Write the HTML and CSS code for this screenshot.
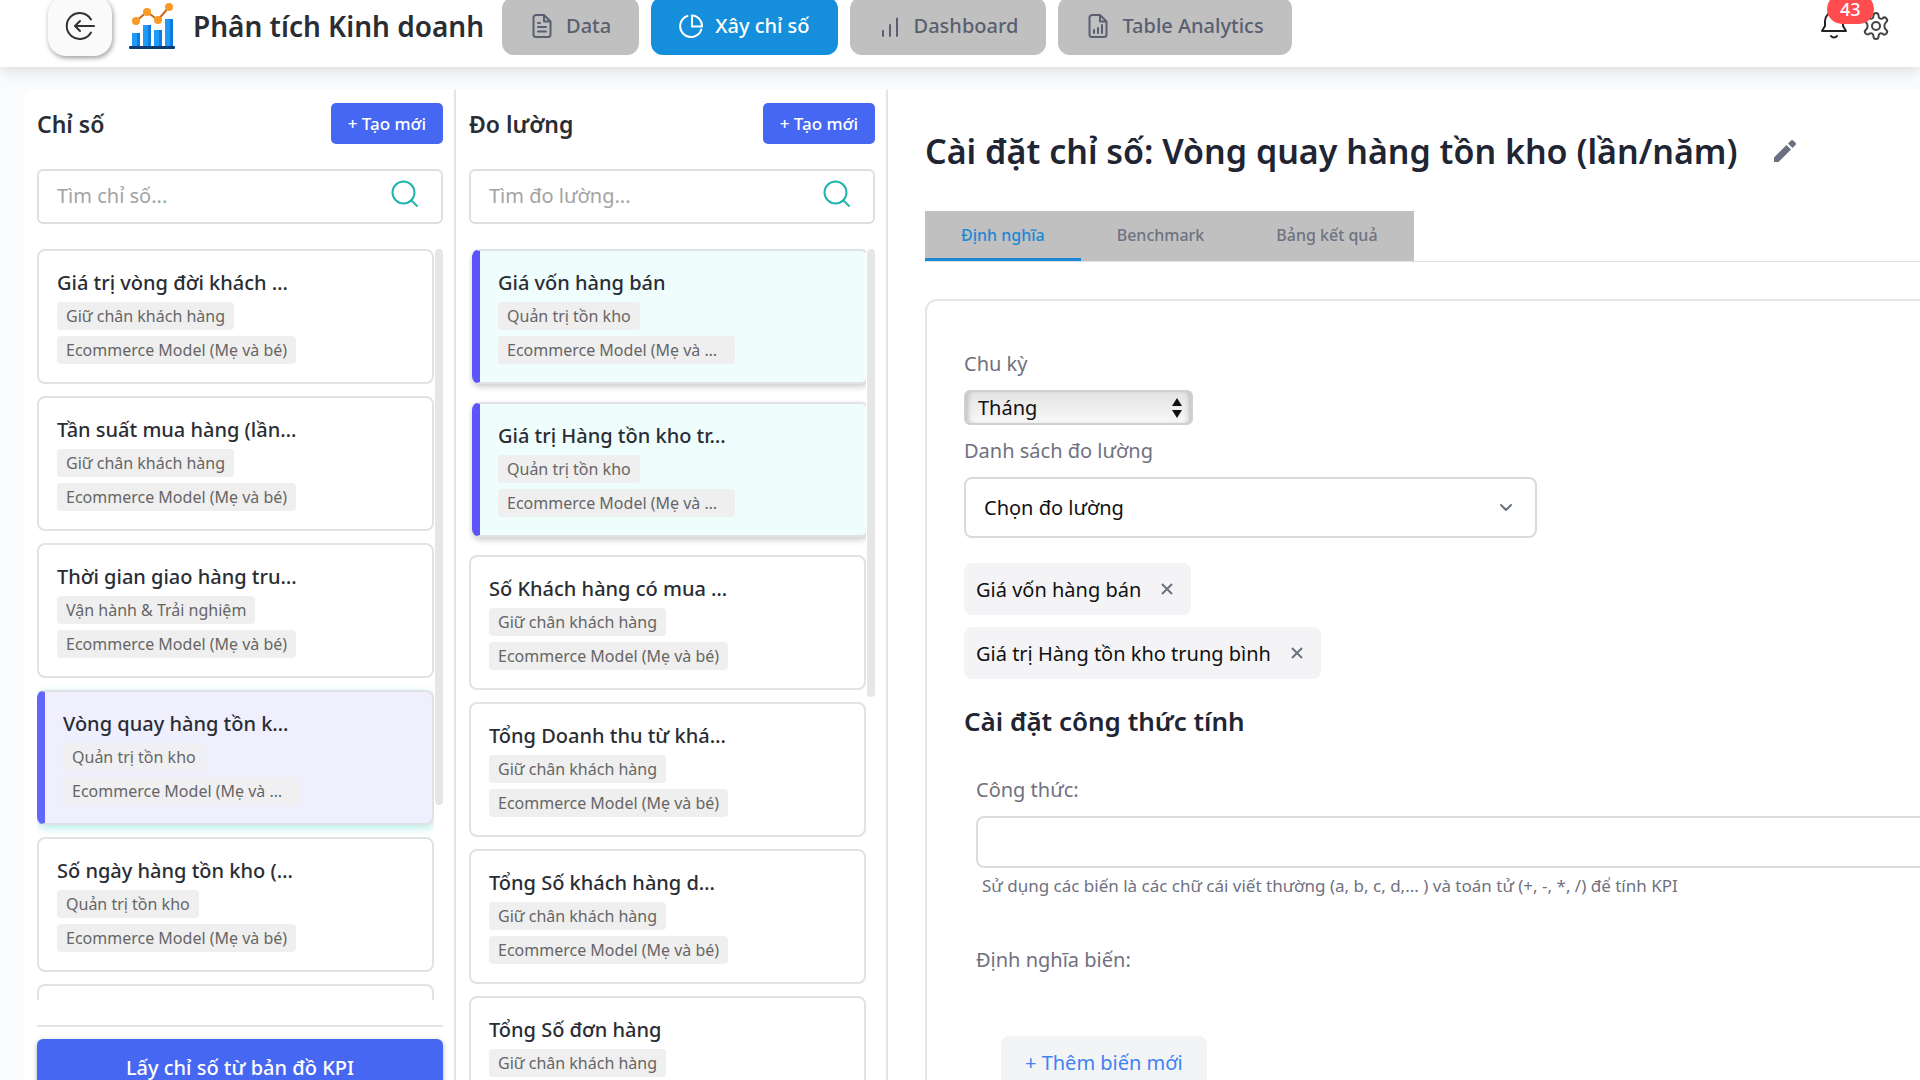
FILE: index.html
```
<!DOCTYPE html>
<html lang="vi">

<head>
    <meta charset="UTF-8">
    <meta name="viewport" content="width=device-width, initial-scale=1.0">
    <title>Phân tích Kinh doanh</title>
    <link rel="stylesheet" href="styles.css">
</head>

<body>
    <header class="topbar">
        <button class="back-btn" aria-label="Quay lại">
            <svg width="32" height="32" viewBox="0 0 32 32" fill="none" stroke="#333" stroke-width="2" stroke-linecap="round" stroke-linejoin="round">
                <path d="M27 9.500A13 13 0 1 0 27 22.500M30 16H11M16 11l-5 5 5 5" />
            </svg>
        </button>
        <svg class="logo" width="46" height="48" viewBox="0 0 46 48">
            <g fill="#1d9bf6">
                <rect x="3" y="31" width="8" height="14" />
                <rect x="14" y="23" width="8" height="22" />
                <rect x="25" y="28" width="8" height="17" />
                <rect x="36" y="17" width="8" height="28" />
            </g>
            <g fill="#0d7be0">
                <rect x="8" y="31" width="3" height="14" />
                <rect x="19" y="23" width="3" height="22" />
                <rect x="30" y="28" width="3" height="17" />
                <rect x="41" y="17" width="3" height="28" />
            </g>
            <rect y="44" width="46" height="3" rx="1" fill="#0b3a75" />
            <path d="M7 19L18 10L29 18L40 5" fill="none" stroke="#c9691c" stroke-width="2" />
            <g fill="#fb9a28">
                <circle cx="7" cy="19" r="4" />
                <circle cx="18" cy="10" r="4" />
                <circle cx="29" cy="18" r="4" />
                <circle cx="40" cy="5" r="4" />
            </g>
        </svg>
        <h1>Phân tích Kinh doanh</h1>
        <nav class="main-nav">
            <button class="nav-btn">
                <svg width="24" height="24" viewBox="0 0 24 24" fill="none" stroke="currentColor" stroke-width="2" stroke-linecap="round" stroke-linejoin="round">
                    <path d="M14 1H6a2.500 2.500 0 0 0-2.500 2.500v17A2.500 2.500 0 0 0 6 23h12a2.500 2.500 0 0 0 2.500-2.500V7.500zM14 1v6.500h6.500M8 9h2M8 13h8M8 17.500h8" />
                </svg>
                Data
            </button>
            <button class="nav-btn active">
                <svg width="24" height="24" viewBox="0 0 24 24" fill="none" stroke="currentColor" stroke-width="2" stroke-linecap="round" stroke-linejoin="round">
                    <path d="M8.500 2A10.800 10.800 0 1 0 22.300 15.500M13 1.500v11h10A10.500 10.500 0 0 0 13 1.500z" />
                </svg>
                Xây chỉ số
            </button>
            <button class="nav-btn">
                <svg width="24" height="24" viewBox="0 0 24 24" fill="none" stroke="currentColor" stroke-width="2" stroke-linecap="round">
                    <path d="M5 17v5M12 11v11M19 4.500v17.500" />
                </svg>
                Dashboard
            </button>
            <button class="nav-btn">
                <svg width="24" height="24" viewBox="0 0 24 24" fill="none" stroke="currentColor" stroke-width="2" stroke-linecap="round" stroke-linejoin="round">
                    <path d="M14 1H6a2.500 2.500 0 0 0-2.500 2.500v17A2.500 2.500 0 0 0 6 23h12a2.500 2.500 0 0 0 2.500-2.500V7.500zM14 1v6.500h6.500M8 16v3M12 14v5M16 11v8" />
                </svg>
                Table Analytics
            </button>
        </nav>
        <div class="top-actions">
            <button class="icon-btn bell" aria-label="Thông báo">
                <svg width="28" height="28" viewBox="0 0 28 28" fill="none" stroke="#222" stroke-width="2" stroke-linecap="round" stroke-linejoin="round">
                    <path d="M2 19h24l-3-5V9a9 9 0 0 0-18 0v5zM11 24c1.500 2 4.500 2 6 0" />
                </svg>
                <span class="badge">43</span>
            </button>
            <button class="icon-btn" aria-label="Cài đặt">
                <svg width="28" height="28" viewBox="0 0 28 28" fill="none" stroke="#444" stroke-width="2" stroke-linecap="round" stroke-linejoin="round">
                    <circle cx="14" cy="14" r="4" />
                    <path d="M11.500 3.500a2.500 2.500 0 0 1 5 0c0 3 2 4 4.200 2.800a2.500 2.500 0 0 1 3.600 3.700c-2.600 2-2.600 6 0 8a2.500 2.500 0 0 1-3.600 3.700c-2.200-1.200-4.200-.2-4.200 2.800a2.500 2.500 0 0 1-5 0c0-3-2-4-4.200-2.800A2.500 2.500 0 0 1 3.700 18c2.600-2 2.600-6 0-8a2.500 2.500 0 0 1 3.600-3.700C9.500 7.500 11.500 6.500 11.500 3.500z" />
                </svg>
            </button>
        </div>
    </header>

    <main class="workspace">
        <section class="column">
            <div class="column-head">
                <h2>Chỉ số</h2>
                <button class="create-btn">+ Tạo mới</button>
            </div>
            <div class="search">
                <input type="text" placeholder="Tìm chỉ số..." aria-label="Tìm chỉ số">
                <svg width="28" height="28" viewBox="0 0 28 28" fill="none" stroke="#1fb5ad" stroke-width="2" stroke-linecap="round">
                    <circle cx="12.500" cy="12.500" r="11" />
                    <path d="M20.500 20.500L26 26" />
                </svg>
            </div>
            <div class="scroll-area">
                <ul class="card-list">
                    <li class="card">
                        <h3>Giá trị vòng đời khách …</h3>
                        <span class="tag">Giữ chân khách hàng</span>
                        <span class="tag">Ecommerce Model (Mẹ và bé)</span>
                    </li>
                    <li class="card">
                        <h3>Tần suất mua hàng (lần…</h3>
                        <span class="tag">Giữ chân khách hàng</span>
                        <span class="tag">Ecommerce Model (Mẹ và bé)</span>
                    </li>
                    <li class="card">
                        <h3>Thời gian giao hàng tru…</h3>
                        <span class="tag">Vận hành &amp; Trải nghiệm</span>
                        <span class="tag">Ecommerce Model (Mẹ và bé)</span>
                    </li>
                    <li class="card current">
                        <h3>Vòng quay hàng tồn k…</h3>
                        <span class="tag">Quản trị tồn kho</span>
                        <span class="tag cut">Ecommerce Model (Mẹ và …</span>
                    </li>
                    <li class="card">
                        <h3>Số ngày hàng tồn kho (…</h3>
                        <span class="tag">Quản trị tồn kho</span>
                        <span class="tag">Ecommerce Model (Mẹ và bé)</span>
                    </li>
                    <li class="card"></li>
                </ul>
                <div class="thumb"></div>
            </div>
            <div class="column-foot">
                <button class="map-btn">Lấy chỉ số từ bản đồ KPI</button>
            </div>
        </section>

        <section class="column">
            <div class="column-head">
                <h2>Đo lường</h2>
                <button class="create-btn">+ Tạo mới</button>
            </div>
            <div class="search">
                <input type="text" placeholder="Tìm đo lường..." aria-label="Tìm đo lường">
                <svg width="28" height="28" viewBox="0 0 28 28" fill="none" stroke="#1fb5ad" stroke-width="2" stroke-linecap="round">
                    <circle cx="12.500" cy="12.500" r="11" />
                    <path d="M20.500 20.500L26 26" />
                </svg>
            </div>
            <div class="scroll-area">
                <ul class="card-list">
                    <li class="card picked">
                        <h3>Giá vốn hàng bán</h3>
                        <span class="tag">Quản trị tồn kho</span>
                        <span class="tag cut">Ecommerce Model (Mẹ và …</span>
                    </li>
                    <li class="card picked">
                        <h3>Giá trị Hàng tồn kho tr…</h3>
                        <span class="tag">Quản trị tồn kho</span>
                        <span class="tag cut">Ecommerce Model (Mẹ và …</span>
                    </li>
                    <li class="card">
                        <h3>Số Khách hàng có mua …</h3>
                        <span class="tag">Giữ chân khách hàng</span>
                        <span class="tag">Ecommerce Model (Mẹ và bé)</span>
                    </li>
                    <li class="card">
                        <h3>Tổng Doanh thu từ khá…</h3>
                        <span class="tag">Giữ chân khách hàng</span>
                        <span class="tag">Ecommerce Model (Mẹ và bé)</span>
                    </li>
                    <li class="card">
                        <h3>Tổng Số khách hàng d…</h3>
                        <span class="tag">Giữ chân khách hàng</span>
                        <span class="tag">Ecommerce Model (Mẹ và bé)</span>
                    </li>
                    <li class="card">
                        <h3>Tổng Số đơn hàng</h3>
                        <span class="tag">Giữ chân khách hàng</span>
                    </li>
                </ul>
                <div class="thumb short"></div>
            </div>
        </section>

        <section class="detail">
            <div class="detail-title">
                <h2>Cài đặt chỉ số: Vòng quay hàng tồn kho (lần/năm)</h2>
                <button class="icon-btn" aria-label="Sửa tên">
                    <svg width="24" height="24" viewBox="0 0 24 24" fill="#6b7080">
                        <path d="M1 18.500V23h4.500L18 10.500 13.500 6zM22.500 6a1.500 1.500 0 0 0 0-2.200L20.200 1.500a1.500 1.500 0 0 0-2.200 0L15 4.500 19.500 9z" />
                    </svg>
                </button>
            </div>
            <div class="tabs">
                <button class="tab active">Định nghĩa</button>
                <button class="tab">Benchmark</button>
                <button class="tab">Bảng kết quả</button>
            </div>
            <form class="panel">
                <label for="period">Chu kỳ</label>
                <div class="period">
                    <select id="period">
                        <option>Tháng</option>
                    </select>
                    <svg width="10" height="20" viewBox="0 0 10 20" fill="#111">
                        <path d="M5 0l5 8H0zM5 20l5-8H0z" />
                    </svg>
                </div>
                <label for="measure">Danh sách đo lường</label>
                <div class="measure">
                    <select id="measure">
                        <option>Chọn đo lường</option>
                    </select>
                    <svg width="14" height="10" viewBox="0 0 14 10" fill="none" stroke="#6b7280" stroke-width="2" stroke-linecap="round" stroke-linejoin="round">
                        <path d="M2 2l5 5 5-5" />
                    </svg>
                </div>
                <div class="chips">
                    <span class="chip">Giá vốn hàng bán
                        <button type="button" aria-label="Xóa">
                            <svg width="12" height="12" viewBox="0 0 12 12" stroke="#6b7280" stroke-width="2"><path d="M1 1l10 10M11 1L1 11" /></svg>
                        </button>
                    </span>
                    <span class="chip">Giá trị Hàng tồn kho trung bình
                        <button type="button" aria-label="Xóa">
                            <svg width="12" height="12" viewBox="0 0 12 12" stroke="#6b7280" stroke-width="2"><path d="M1 1l10 10M11 1L1 11" /></svg>
                        </button>
                    </span>
                </div>
                <h3>Cài đặt công thức tính</h3>
                <div class="formula">
                    <label for="formula">Công thức:</label>
                    <input type="text" id="formula">
                    <p>Sử dụng các biến là các chữ cái viết thường (a, b, c, d,... ) và toán tử (+, -, *, /) để tính KPI</p>
                    <span class="variables">Định nghĩa biến:</span>
                    <button type="button" class="add-btn">+ Thêm biến mới</button>
                </div>
            </form>
        </section>
    </main>
</body>

</html>
```
FILE: styles.css
```
* {
    box-sizing: border-box;
}

body {
    margin: 0;
    height: 100vh;
    display: flex;
    flex-direction: column;
    overflow: hidden;
    font-family: "Noto Sans", sans-serif;
    font-size: 20px;
    color: #2a2d34;
    background: #fafbfd;
}

h1,
h2,
h3,
p,
ul {
    margin: 0;
    padding: 0;
}

button,
input,
select {
    font: inherit;
}

button {
    border: none;
    cursor: pointer;
}

/* header */
.topbar {
    display: flex;
    flex: none;
    align-items: center;
    height: 67px;
    padding: 0 30px 16px 48px;
    background: #fff;
    box-shadow: 0 2px 16px rgba(0, 0, 0, 0.15);
}

.back-btn {
    display: flex;
    align-items: center;
    justify-content: center;
    width: 64px;
    height: 60px;
    padding: 0;
    border-radius: 18px;
    background: #fafafa;
    box-shadow: 1px 2px 5px rgba(0, 0, 0, 0.4);
}

.logo {
    margin: 0 18px 0 17px;
}

h1 {
    font-size: 28px;
    font-weight: 600;
    white-space: nowrap;
}

.main-nav {
    display: flex;
    gap: 12px;
    margin-left: 18px;
}

.nav-btn {
    display: flex;
    align-items: center;
    gap: 12px;
    height: 58px;
    padding: 0 28px;
    border-radius: 12px;
    background: #c0c0c0;
    color: #5a5f70;
    font-weight: 500;
    white-space: nowrap;
}

.nav-btn.active {
    background: #158fdb;
    color: #fff;
}

.top-actions {
    display: flex;
    gap: 14px;
    margin-left: auto;
}

.icon-btn {
    display: flex;
    padding: 0;
    background: none;
}

.bell {
    position: relative;
}

.badge {
    position: absolute;
    top: -18px;
    left: 7px;
    padding: 0 13px;
    border-radius: 16px;
    background: #ff4d4f;
    color: #fff;
    font-size: 18px;
    font-weight: 500;
    line-height: 30px;
}

/* columns */
.workspace {
    display: flex;
    flex: 1;
    min-height: 0;
    margin: 23px 0 -28px 24px;
    border-radius: 8px 0 0 0;
    background: #fff;
}

.column {
    display: flex;
    flex: none;
    flex-direction: column;
    width: 432px;
    padding: 13px 11px 13px 13px;
    border-right: 2px solid #e2e4e8;
}

.column-head {
    display: flex;
    align-items: center;
    justify-content: space-between;
}

.column-head h2 {
    font-size: 23px;
    font-weight: 600;
    line-height: 40px;
}

.create-btn {
    height: 41px;
    padding: 0 17px;
    border-radius: 5px;
    background: #4667f2;
    color: #fff;
    font-size: 17px;
    font-weight: 500;
}

.search {
    display: flex;
    flex: none;
    align-items: center;
    height: 55px;
    margin: 25px 0;
    padding: 0 22px 6px 18px;
    border: 2px solid #dfdfe2;
    border-radius: 6px;
}

.search input {
    flex: 1;
    min-width: 0;
    padding: 4px 0 0;
    border: none;
    outline: none;
    background: none;
}

.search input::placeholder {
    color: #a3a3a3;
}

.scroll-area {
    display: flex;
    flex: 1;
    gap: 1px;
    min-height: 0;
}

.card-list {
    flex: 1;
    min-width: 0;
    overflow: hidden;
    list-style: none;
}

.card {
    display: flex;
    flex-direction: column;
    align-items: flex-start;
    gap: 6px;
    min-height: 135px;
    margin-bottom: 12px;
    padding: 18px;
    border: 2px solid #e1e2e5;
    border-radius: 8px;
    white-space: nowrap;
}

.card h3 {
    font-size: 20px;
    font-weight: 500;
    line-height: 27px;
}

.tag {
    padding: 0 9px;
    border-radius: 4px;
    background: #efefef;
    color: #666;
    font-size: 16px;
    line-height: 28px;
}

.tag.cut {
    min-width: 237px;
}

.card.current {
    border-left: 8px solid #6366fa;
    background: #efeffd;
    box-shadow: 0 3px 8px rgba(60, 210, 190, 0.4);
}

.card.current .tag {
    background: #f0f0f3;
}

.card.picked {
    margin: 0 -3px 18px 3px;
    border-left: 8px solid #5b55fa;
    background: #effdfd;
    box-shadow: 0 3px 6px rgba(0, 0, 0, 0.2);
}

.card.picked .tag {
    background: #efeff0;
}

.thumb {
    width: 8px;
    height: 74%;
    border-radius: 4px;
    background: #e6e6e6;
}

.thumb.short {
    height: 53%;
}

.column-foot {
    margin-top: 25px;
    padding-top: 12px;
    border-top: 2px solid #e2e4e8;
}

.map-btn {
    width: 100%;
    height: 56px;
    border-radius: 6px;
    background: #4667f2;
    box-shadow: 0 2px 5px rgba(0, 0, 0, 0.3);
    color: #fff;
    font-weight: 500;
}

/* detail */
.detail {
    flex: 1;
    min-width: 0;
    padding: 36px 0 0 37px;
}

.detail-title {
    display: flex;
    align-items: center;
    gap: 36px;
}

.detail-title h2 {
    color: #1f2533;
    font-size: 34px;
    font-weight: 600;
    line-height: 50px;
    white-space: nowrap;
}

.tabs {
    display: flex;
    margin-top: 35px;
    border-bottom: 1px solid #dfe0e3;
}

.tab {
    height: 50px;
    padding: 0 36px;
    border-bottom: 3px solid #c0c0c0;
    background: #c0c0c0;
    color: #6f7280;
    font-size: 16px;
    font-weight: 500;
}

.tab.active {
    border-bottom-color: #1a8ad4;
    color: #1a8ad4;
}

.panel {
    display: flex;
    flex-direction: column;
    align-items: flex-start;
    height: 860px;
    margin: 37px -40px 0 0;
    padding: 49px 37px;
    border: 2px solid #e6e6e9;
    border-radius: 12px;
}

.panel label,
.variables {
    color: #70717f;
    line-height: 28px;
}

.period,
.measure {
    display: flex;
    align-items: center;
    width: 229px;
    height: 35px;
    margin: 12px 0;
    border: 2px solid #d0d0d0;
    border-radius: 6px;
    background: linear-gradient(#e4e4e4, #f8f8f8);
    box-shadow: inset 5px 0 5px -3px #bbb, inset -5px 0 5px -3px #bbb;
}

.period select,
.measure select {
    flex: 1;
    height: 100%;
    padding: 0 12px;
    border: none;
    outline: none;
    appearance: none;
    background: none;
    color: #111;
}

.period svg {
    margin-right: 9px;
}

.measure {
    width: 573px;
    height: 61px;
    margin: 12px 0 25px;
    border-color: #d9dade;
    border-radius: 8px;
    background: #fff;
    box-shadow: none;
}

.measure select {
    padding: 0 18px;
}

.measure svg {
    margin-right: 22px;
}

.chips {
    display: flex;
    flex-direction: column;
    align-items: flex-start;
    gap: 12px;
}

.chip {
    display: flex;
    align-items: center;
    gap: 20px;
    height: 52px;
    padding: 0 18px 0 12px;
    border-radius: 8px;
    background: #f4f4f6;
    color: #111;
}

.chip button {
    display: flex;
    padding: 0;
    background: none;
}

.panel h3 {
    margin: 24px 0 37px;
    color: #1f2533;
    font-size: 26px;
    font-weight: 600;
    line-height: 36px;
}

.formula {
    display: flex;
    flex-direction: column;
    align-items: flex-start;
    align-self: stretch;
    padding-left: 12px;
}

.formula input {
    width: calc(100% + 20px);
    height: 52px;
    margin: 12px 0 4px;
    padding: 0 12px;
    border: 2px solid #dcdcdf;
    border-radius: 8px;
}

.formula p {
    padding-left: 6px;
    color: #70717f;
    font-size: 17px;
    line-height: 28px;
}

.variables {
    margin: 46px 0 62px;
}

.add-btn {
    height: 52px;
    margin-left: 25px;
    padding: 0 24px;
    border-radius: 8px;
    background: #f3f4f6;
    color: #3f82f0;
}
```
